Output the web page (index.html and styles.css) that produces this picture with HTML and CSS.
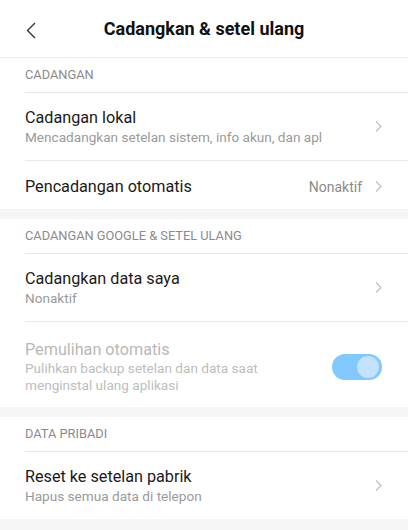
FILE: index.html
```html
<!DOCTYPE html>
<html lang="id">
<head>
<meta charset="UTF-8" />
<meta name="viewport" content="width=device-width, initial-scale=1.0" />
<title>Cadangkan &amp; setel ulang</title>
<link rel="stylesheet" href="styles.css">
</head>
<body>

<!-- Shapka -->
<header class="topbar">
  <svg class="back" width="10" height="17" viewBox="0 0 10 17"><polyline points="9,1 1.5,8.5 9,16" fill="none" stroke="#333" stroke-width="1.4"/></svg>
  <h1>Cadangkan &amp; setel ulang</h1>
</header>

<!-- Cadangan -->
<section class="group">
  <div class="sec-head">CADANGAN</div>
  <div class="row">
    <div class="text">
      <div class="title">Cadangan lokal</div>
      <div class="sub">Mencadangkan setelan sistem, info akun, dan apl</div>
    </div>
    <svg class="chev" width="7" height="11" viewBox="0 0 7 11"><polyline points="1,0.5 6,5.5 1,10.5" fill="none" stroke="#bdbdbd" stroke-width="1.1"/></svg>
  </div>
  <div class="row single">
    <div class="text">
      <div class="title">Pencadangan otomatis</div>
    </div>
    <span class="value">Nonaktif</span>
    <svg class="chev" width="7" height="11" viewBox="0 0 7 11"><polyline points="1,0.5 6,5.5 1,10.5" fill="none" stroke="#bdbdbd" stroke-width="1.1"/></svg>
  </div>
</section>

<!-- Google -->
<section class="group">
  <div class="sec-head">CADANGAN GOOGLE &amp; SETEL ULANG</div>
  <div class="row">
    <div class="text">
      <div class="title">Cadangkan data saya</div>
      <div class="sub">Nonaktif</div>
    </div>
    <svg class="chev" width="7" height="11" viewBox="0 0 7 11"><polyline points="1,0.5 6,5.5 1,10.5" fill="none" stroke="#bdbdbd" stroke-width="1.1"/></svg>
  </div>
  <div class="row tall disabled">
    <div class="text narrow">
      <div class="title">Pemulihan otomatis</div>
      <div class="sub">Pulihkan backup setelan dan data saat menginstal ulang aplikasi</div>
    </div>
    <span class="toggle on"><span class="knob"></span></span>
  </div>
</section>

<!-- Data pribadi -->
<section class="group">
  <div class="sec-head">DATA PRIBADI</div>
  <div class="row">
    <div class="text">
      <div class="title">Reset ke setelan pabrik</div>
      <div class="sub">Hapus semua data di telepon</div>
    </div>
    <svg class="chev" width="7" height="11" viewBox="0 0 7 11"><polyline points="1,0.5 6,5.5 1,10.5" fill="none" stroke="#bdbdbd" stroke-width="1.1"/></svg>
  </div>
</section>

</body>
</html>
```

FILE: styles.css
```css
/* Obshchie */
body {
  margin: 0;
  font-family: Roboto, "Noto Sans", sans-serif;
  background: #f6f6f6;
  color: #1a1a1a;
}

/* Shapka */
.topbar {
  height: 57px;
  display: flex;
  align-items: center;
  justify-content: center;
  position: relative;
  background: #fff;
  border-bottom: 1px solid #ededed;
}
.topbar h1 {
  margin: 0;
  font-size: 18px;
  font-weight: 700;
  color: #111;
}
.back {
  position: absolute;
  left: 26px;
  top: 22px;
}

/* Gruppy */
.group {
  background: #fff;
  margin-bottom: 10px;
}
.sec-head {
  margin-left: 25px;
  height: 34px;
  line-height: 34px;
  font-size: 12.8px;
  color: #8a8a8a;
  border-bottom: 1px solid #e9e9e9;
}

/* Stroki */
.row {
  margin-left: 25px;
  padding-right: 26px;
  height: 67px;
  display: flex;
  align-items: center;
}
.row + .row {
  border-top: 1px solid #e9e9e9;
}
.row.single { height: 49px; padding-top: 3px; box-sizing: border-box; }
.row.tall { height: 86px; padding-top: 5px; box-sizing: border-box; }
.text { flex: 1; }
.text.narrow { max-width: 275px; }
.title {
  font-size: 16.2px;
  line-height: 20px;
  color: #1a1a1a;
}
.sub {
  font-size: 13.6px;
  line-height: 18px;
  color: #9a9a9a;
}
.row.disabled .title { color: #b8b8b8; }
.row.disabled .sub { color: #bdbdbd; line-height: 17px; }
.value {
  font-size: 14px;
  color: #8a8a8a;
  margin-right: 13px;
}
.chev { flex: none; }

/* Pereklyuchatel */
.toggle {
  margin-left: auto;
  width: 50px;
  height: 26px;
  border-radius: 13px;
  background: #80c8fe;
  position: relative;
  flex: none;
}
.toggle .knob {
  position: absolute;
  right: 3px;
  top: 2px;
  width: 22px;
  height: 22px;
  border-radius: 50%;
  background: #c2e2fe;
}
```
